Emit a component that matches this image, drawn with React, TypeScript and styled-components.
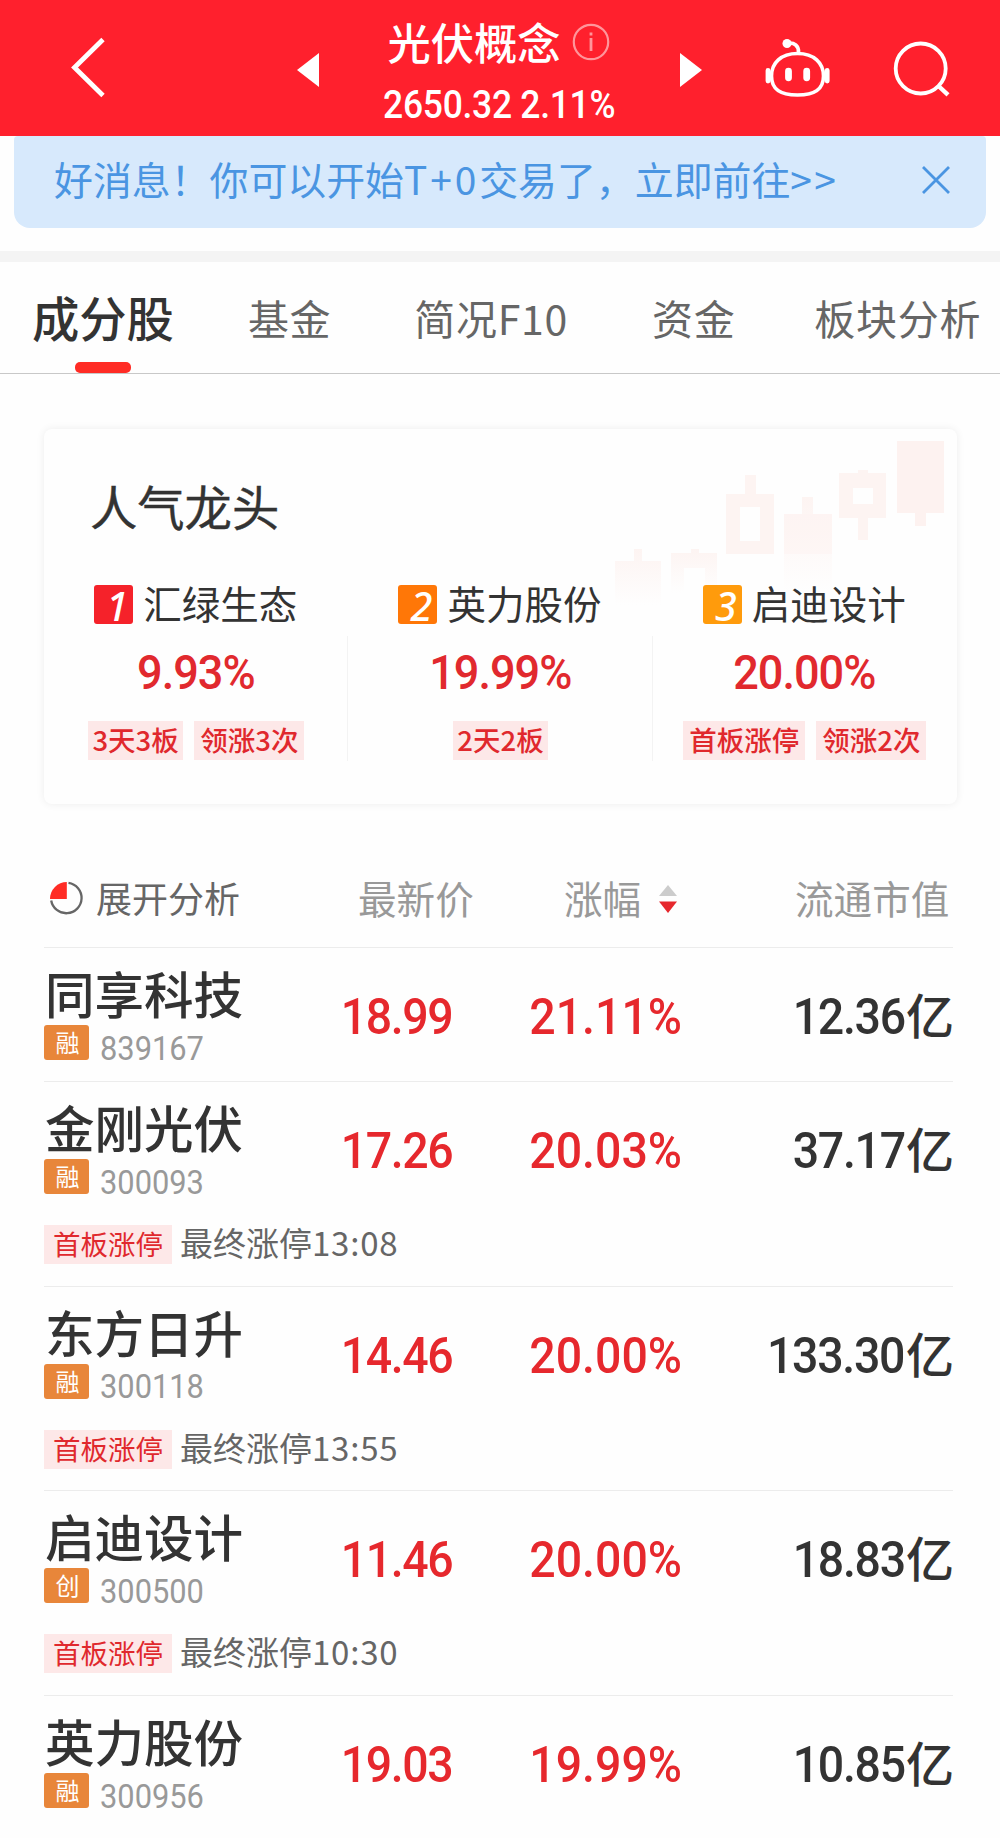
import React from "react";
import styled, { createGlobalStyle } from "styled-components";

const CJK = `"Noto Sans CJK SC", sans-serif`;
const DIGITS = `Roboto, "Noto Sans CJK SC", sans-serif`;

const GlobalStyle = createGlobalStyle`
  * { box-sizing: border-box; }
  body { margin: 0; background: #fefefe; font-family: ${CJK}; color: #333; }
`;

const Page = styled.div`
  width: 1000px;
  height: 1838px;
  overflow: hidden;
  background: #fefefe;
  white-space: nowrap;
`;

/* Condensed figures used for every quote on the page. */
const Num = styled.span<{ $origin: "left" | "center" | "right"; $tight?: number }>`
  display: inline-block;
  font-family: ${DIGITS};
  letter-spacing: -${(p) => p.$tight ?? 0}px;
  margin-right: ${(p) => p.$tight ?? 0}px;
  transform: scaleX(0.92);
  transform-origin: ${(p) => p.$origin} center;
`;

/* ---------- header ---------- */

const Header = styled.header`
  display: grid;
  grid-template-columns: 297px 22px 361px 22px 63px 65px 63px 1fr;
  height: 136px;
  background: #ff202d;
  color: #fff;
  svg { display: block; }
`;

const IconSlot = styled.div<{ $top: number; $left?: number }>`
  padding-top: ${(p) => p.$top}px;
  padding-left: ${(p) => p.$left ?? 0}px;
`;

const TitleBlock = styled.div`
  display: flex;
  flex-direction: column;
  align-items: center;
`;

const TitleLine = styled.div`
  display: flex;
  align-items: center;
  height: 60px;
  margin: 11px 2px 0 0;
  gap: 11px;
  font-size: 43.3px;
  line-height: 60px;
  font-weight: 500;
  svg { margin-top: 2px; }
`;

const IndexLine = styled.div`
  margin-top: 9px;
  font-family: ${DIGITS};
  font-size: 38.5px;
  line-height: 50px;
  font-weight: 500;
`;

/* ---------- notice ---------- */

const Notice = styled.div`
  display: flex;
  justify-content: space-between;
  align-items: center;
  height: 92px;
  margin: 0 14px 23px;
  padding: 0 36px 5px 40px;
  border-radius: 4px 4px 16px 16px;
  background: #d7e9fc;
  color: #4a95e2;
`;

const NoticeText = styled.span`
  font-size: 38.9px;
  line-height: 56px;
  margin-top: -3px;
`;

const Spaced = styled.span<{ $by: number }>`
  letter-spacing: ${(p) => p.$by}px;
`;

/* ---------- tabs ---------- */

const Tabs = styled.nav`
  display: flex;
  height: 123px;
  border-top: 11px solid #f4f4f4;
  border-bottom: 1px solid #c8c8c8;
  padding-left: 32px;
`;

const Tab = styled.div<{ $active?: boolean; $gap?: number }>`
  display: flex;
  flex-direction: column;
  align-items: center;
  justify-content: space-between;
  margin-left: ${(p) => p.$gap ?? 0}px;
  font-size: ${(p) => (p.$active ? 47.3 : 41)}px;
  font-weight: ${(p) => (p.$active ? 500 : 400)};
  letter-spacing: ${(p) => (p.$active ? 0 : 0.7)}px;
  line-height: 60px;
  padding-top: 25px;
  color: ${(p) => (p.$active ? "#333" : "#666")};
`;

const TabBar = styled.i`
  width: 56px;
  height: 11px;
  border-radius: 5px;
  background: #ff2c25;
`;

/* ---------- leaders card ---------- */

const Card = styled.section`
  position: relative;
  height: 375px;
  margin: 55px 43px 0 44px;
  border-radius: 8px;
  background: #fefefe;
  box-shadow: 0 0 9px rgba(0, 0, 0, 0.07);
  padding-top: 45px;
`;

const CandleArt = styled.svg`
  position: absolute;
  right: 0;
  top: 0;
`;

const CardTitle = styled.h2`
  position: relative;
  margin: 0 0 0 46px;
  font-size: 47.3px;
  font-weight: 400;
  line-height: 64px;
  -webkit-text-stroke: 0.4px #333;
`;

const Leaders = styled.div`
  position: relative;
  display: grid;
  grid-template-columns: repeat(3, 1fr);
  margin-top: 44px;
`;

const Leader = styled.div`
  display: flex;
  flex-direction: column;
  align-items: center;
  height: 182px;
  background: linear-gradient(#f3f3f3, #f3f3f3) right 0 top 54px / 1px 125px no-repeat;
  &:last-child { background: none; }
`;

const LeaderName = styled.div`
  display: flex;
  align-items: flex-start;
  height: 46px;
  margin-right: 1px;
  gap: 10px;
  font-size: 38.5px;
  line-height: 40px;
`;

const Rank = styled.span<{ $color: string }>`
  width: 39px;
  height: 39px;
  margin-top: 3px;
  border-radius: 3px;
  padding-left: 7px;
  background: ${(p) => p.$color};
  color: #fff;
  text-align: center;
  font-family: "Noto Sans", sans-serif;
  font-style: italic;
  font-weight: 500;
  font-size: 39.5px;
  line-height: 43px;
`;

const LeaderPct = styled.div`
  margin-top: 20px;
  height: 50px;
  font-family: ${DIGITS};
  font-weight: 500;
  font-size: 49px;
  line-height: 50px;
  color: #e1292e;
`;

const Tags = styled.div`
  display: flex;
  gap: 11px;
  margin-top: 23px;
`;

const Tag = styled.span<{ $pad: number; $weight?: number }>`
  height: 39px;
  padding: 0 ${(p) => p.$pad}px;
  background: #fde8e8;
  color: #e0282d;
  font-size: 27.5px;
  font-weight: ${(p) => p.$weight ?? 500};
  line-height: 37px;
`;

/* ---------- stock table ---------- */

const Table = styled.section`
  margin: 0 47px 0 44px;
`;

const TableHead = styled.div`
  display: grid;
  grid-template-columns: 314px 206px 231px 1fr;
  height: 144px;
  padding-top: 68px;
  border-bottom: 1px solid #ececec;
  font-size: 38.6px;
  line-height: 50px;
  color: #999;
`;

const HeadCell = styled.div`
  display: flex;
`;

const Analysis = styled(HeadCell)`
  gap: 11px;
  padding-left: 5px;
  font-size: 36px;
  color: #666;
  svg { margin-top: 8px; }
`;

const SortIcon = styled.svg`
  margin: 13px 0 0 18px;
`;

const StockItem = styled.article`
  border-bottom: 1px solid #ececec;
  &:last-child { border-bottom: none; }
`;

const StockMain = styled.div`
  display: grid;
  grid-template-columns: 240px 170px 228px 1fr;
  height: 133px;
`;

const StockName = styled.div`
  padding: 16px 0 0 1px;
  font-size: 49.5px;
  line-height: 58px;
  font-weight: 500;
`;

const StockMeta = styled.div`
  display: flex;
  align-items: center;
  height: 35px;
  margin-top: 3px;
  gap: 11px;
  font-size: 33.5px;
  line-height: 35px;
  color: #999;
`;

const Market = styled.span`
  width: 45px;
  height: 35px;
  border-radius: 3px;
  background: #e8863a;
  color: #fff;
  text-align: center;
  font-size: 24px;
  line-height: 34px;
  padding-left: 2px;
`;

const Code = styled.span`
  padding-top: 8px;
`;

const Figure = styled.div<{ $dark?: boolean }>`
  display: flex;
  justify-content: flex-end;
  align-items: baseline;
  padding-top: 39px;
  font-family: ${DIGITS};
  font-weight: 500;
  font-size: 50.5px;
  line-height: 60px;
  color: ${(p) => (p.$dark ? "#333" : "#e6282d")};
`;

const Unit = styled.span`
  margin-right: -1px;
  font-size: 48px;
  line-height: 50px;
`;

const LimitNote = styled.div`
  display: flex;
  height: 70.7px;
  padding-top: 10px;
  gap: 8px;
  font-size: 33px;
  line-height: 34px;
  color: #666;
`;

const leaders = [
  { name: "汇绿生态", pct: "9.93%", tags: ["3天3板", "领涨3次"], color: "#f5222a" },
  { name: "英力股份", pct: "19.99%", tags: ["2天2板"], color: "#ff7707" },
  { name: "启迪设计", pct: "20.00%", tags: ["首板涨停", "领涨2次"], color: "#ff9b0c" },
];

const stocks = [
  { name: "同享科技", market: "融", code: "839167", price: "18.99", pct: "21.11%", cap: "12.36", time: "" },
  { name: "金刚光伏", market: "融", code: "300093", price: "17.26", pct: "20.03%", cap: "37.17", time: "13:08" },
  { name: "东方日升", market: "融", code: "300118", price: "14.46", pct: "20.00%", cap: "133.30", time: "13:55" },
  { name: "启迪设计", market: "创", code: "300500", price: "11.46", pct: "20.00%", cap: "18.83", time: "10:30" },
  { name: "英力股份", market: "融", code: "300956", price: "19.03", pct: "19.99%", cap: "10.85", time: "" },
];

const Candles = () => (
  <CandleArt width="357" height="180" viewBox="600 429 357 180">
    <defs>
      <linearGradient id="fade" x1="0" y1="0" x2="0" y2="1">
        <stop offset="0" stopColor="#fdf4f2" />
        <stop offset="1" stopColor="#fdf4f2" stopOpacity="0" />
      </linearGradient>
    </defs>
    <path d="M615 561h19v-12h8v12h19v44h-46z" fill="url(#fade)" />
    <path d="M671 553h20v-4h8v4h18v40h-12v-25h-21v25h-13z" fill="url(#fade)" />
    <path fillRule="evenodd" d="M726 494h19v-19h11v19h18v60h-48zM740 507v34h20v-34z" fill="#fdf4f2" />
    <path d="M784 514h18v-17h11v17h19v78h-48z" fill="url(#fade)" />
    <path d="M784 514h48v40h-48z" fill="#fdf3f1" opacity=".6" />
    <path fillRule="evenodd" d="M839 473h19v-3h10v3h18v45h-18v22h-10v-22h-19zM853 488v16h20v-16z" fill="#fdf4f2" />
    <path d="M897 441h47v72h-18v13h-11v-13h-18z" fill="#fdf2f0" />
  </CandleArt>
);

export default function App() {
  return (
    <Page>
      <GlobalStyle />
      <Header>
        <IconSlot $top={36} $left={68}>
          <svg width="40" height="64" viewBox="68 36 40 64" fill="none" stroke="#fff" strokeWidth="4.8">
            <path d="M103 39.5L74.5 67.5L103 95.5" />
          </svg>
        </IconSlot>
        <IconSlot $top={53}>
          <svg width="22" height="34"><path d="M22 0v34L0 17z" fill="#fff" /></svg>
        </IconSlot>
        <TitleBlock>
          <TitleLine>
            光伏概念
            <svg width="38" height="38" viewBox="0 0 38 38" fill="none" stroke="#ff959b" strokeWidth="2.2">
              <circle cx="19" cy="19" r="17.2" />
              <path d="M19 15v13M19 9.5v3" strokeWidth="2.8" />
            </svg>
          </TitleLine>
          <IndexLine><Num $origin="center" $tight={0.3}>2650.32 2.11%</Num></IndexLine>
        </TitleBlock>
        <IconSlot $top={53}>
          <svg width="22" height="34"><path d="M0 0v34L22 17z" fill="#fff" /></svg>
        </IconSlot>
        <span />
        <IconSlot $top={36}>
          <svg width="66" height="64" viewBox="765 36 66 64" fill="none" stroke="#fff" strokeWidth="3.6">
            <path d="M797.5 53.500c16.500 0 26 9.500 26 22.500c0 14-9.500 19-26 19s-26-5-26-19c0-13 9.500-22.500 26-22.500z" />
            <path d="M787 43.500c7.500-1.500 12 2.500 11.500 9" />
            <circle cx="787" cy="43.500" r="4.500" fill="#fff" stroke="none" />
            <path d="M768 70.500v10.500M827.200 70.500v10.500" strokeWidth="4.800" strokeLinecap="round" />
            <path d="M788.500 71.200v6.600M806.700 71.200v6.600" strokeWidth="6.800" strokeLinecap="round" />
          </svg>
        </IconSlot>
        <span />
        <IconSlot $top={40}>
          <svg width="60" height="60" viewBox="893 40 60 60" fill="none" stroke="#fff" strokeWidth="3.800">
            <circle cx="920.700" cy="68.500" r="25" />
            <path d="M938.500 86L948 94.800" strokeWidth="4.400" />
          </svg>
        </IconSlot>
      </Header>

      <Notice>
        <NoticeText>
          好消息！你可以开始<Spaced $by={2.9}>T+0</Spaced>交易了，立即前往<Spaced $by={2.3}>&gt;&gt;</Spaced>
        </NoticeText>
        <svg width="28" height="28" viewBox="0 0 28 28" fill="none" stroke="#4a95e2" strokeWidth="2.800">
          <path d="M1 1L27 27M27 1L1 27" />
        </svg>
      </Notice>

      <Tabs>
        <Tab $active>成分股<TabBar /></Tab>
        <Tab $gap={74}>基金</Tab>
        <Tab $gap={83}>简况F10</Tab>
        <Tab $gap={84}>资金</Tab>
        <Tab $gap={79}>板块分析</Tab>
      </Tabs>

      <Card>
        <Candles />
        <CardTitle>人气龙头</CardTitle>
        <Leaders>
          {leaders.map((l, i) => (
            <Leader key={l.name}>
              <LeaderName><Rank $color={l.color}>{i + 1}</Rank>{l.name}</LeaderName>
              <LeaderPct><Num $origin="center" $tight={1.1}>{l.pct}</Num></LeaderPct>
              <Tags>{l.tags.map((t) => <Tag key={t} $pad={/^\d/.test(t) ? 4.5 : 6}>{t}</Tag>)}</Tags>
            </Leader>
          ))}
        </Leaders>
      </Card>

      <Table>
        <TableHead>
          <Analysis>
            <svg width="36" height="36" viewBox="49 879 36 36" fill="none">
              <path d="M68.500 881.800A15.300 15.300 0 1 1 51.200 899.500" stroke="#666" strokeWidth="2.300" />
              <path d="M66.800 881v17H50A16.800 17 0 0 1 66.800 881z" fill="#ff2c25" />
            </svg>
            展开分析
          </Analysis>
          <HeadCell>最新价</HeadCell>
          <HeadCell>
            涨幅
            <SortIcon width="18" height="28" viewBox="0 0 18 28">
              <path d="M9 0l9 11H0z" fill="#ccc" />
              <path d="M0 16.500h18L9 28z" fill="#e6282d" />
            </SortIcon>
          </HeadCell>
          <HeadCell>流通市值</HeadCell>
        </TableHead>
        {stocks.map((s) => (
          <StockItem key={s.code}>
            <StockMain>
              <div>
                <StockName>{s.name}</StockName>
                <StockMeta>
                  <Market>{s.market}</Market>
                  <Code><Num $origin="left">{s.code}</Num></Code>
                </StockMeta>
              </div>
              <Figure><Num $origin="right" $tight={1.5}>{s.price}</Num></Figure>
              <Figure><Num $origin="right">{s.pct}</Num></Figure>
              <Figure $dark><Num $origin="right" $tight={1.4}>{s.cap}</Num><Unit>亿</Unit></Figure>
            </StockMain>
            {s.time && (
              <LimitNote>
                <Tag $pad={9} $weight={400}>首板涨停</Tag>
                <span>最终涨停<Spaced $by={0.8}>{s.time}</Spaced></span>
              </LimitNote>
            )}
          </StockItem>
        ))}
      </Table>
    </Page>
  );
}
